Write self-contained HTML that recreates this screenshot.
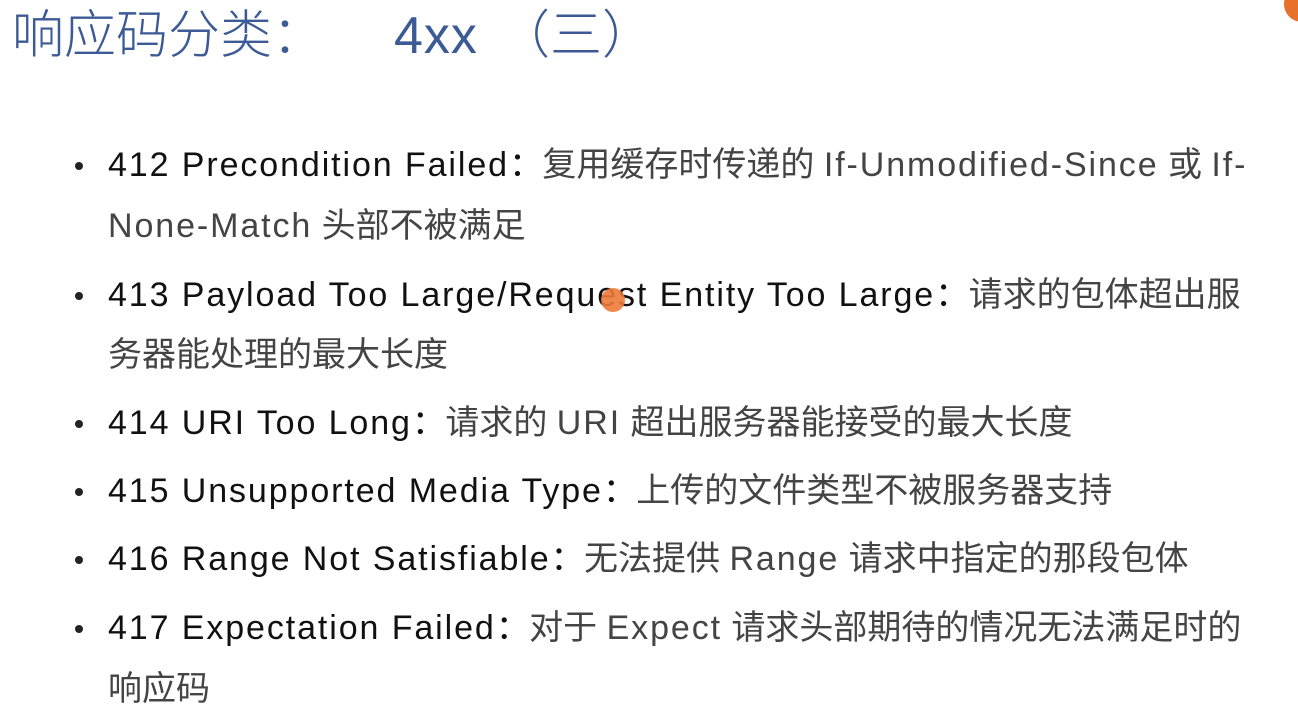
<!DOCTYPE html>
<html><head><meta charset="utf-8"><style>
html,body{margin:0;padding:0;width:1298px;height:708px;overflow:hidden;background:#fff;}
body{position:relative;font-family:"Liberation Sans","Noto Sans CJK SC",sans-serif;}
.t{position:absolute;left:12px;top:0px;font-size:52px;color:#3c5a96;white-space:nowrap;font-weight:300;line-height:72px;}
.l{position:absolute;left:108px;font-size:34px;line-height:40px;white-space:nowrap;color:#444;}
.l b{font-weight:normal;color:#111;}
.e{letter-spacing:1.9px;}
.c{letter-spacing:-10px;}
.dot{position:absolute;left:75px;width:8px;height:8px;border-radius:50%;background:#222;}
</style></head><body>
<div class="t">响应码分类：<span style="display:inline-block;width:70px"></span><span style="letter-spacing:1px">4xx</span><span style="display:inline-block;width:20px"></span>（三）</div>
<div style="position:absolute;left:1284px;top:-14px;width:36px;height:36px;border-radius:50%;background:#e8712a"></div>

<div class="dot" style="top:162px"></div>
<div class="l" style="top:145px"><b class="e">412 Precondition Failed</b><b class="c">：</b>&nbsp;复用缓存时传递的 <span class="e">If-Unmodified-Since</span> 或 <span class="e">If-</span></div>
<div class="l" style="top:206px"><span class="e">None-Match</span> 头部不被满足</div>

<div class="dot" style="top:292px"></div>
<div class="l" style="top:275px"><b class="e">413 Payload Too Large/Request Entity Too Large</b><b class="c">：</b>&nbsp;请求的包体超出服</div>
<div class="l" style="top:335px">务器能处理的最大长度</div>

<div class="dot" style="top:420px"></div>
<div class="l" style="top:403px"><b class="e">414 URI Too Long</b><b class="c">：</b>&nbsp;请求的 <span class="e">URI</span> 超出服务器能接受的最大长度</div>

<div class="dot" style="top:488px"></div>
<div class="l" style="top:471px"><b class="e">415 Unsupported Media Type</b><b class="c">：</b>&nbsp;上传的文件类型不被服务器支持</div>

<div class="dot" style="top:556px"></div>
<div class="l" style="top:539px"><b class="e">416 Range Not Satisfiable</b><b class="c">：</b>&nbsp;无法提供 <span class="e">Range</span> 请求中指定的那段包体</div>

<div class="dot" style="top:625px"></div>
<div class="l" style="top:608px"><b class="e">417 Expectation Failed</b><b class="c">：</b>&nbsp;对于 <span class="e">Expect</span> 请求头部期待的情况无法满足时的</div>
<div class="l" style="top:669px">响应码</div>

<div style="position:absolute;left:601px;top:288px;width:24px;height:24px;border-radius:50%;background:#ee7a3a;opacity:0.9"></div>
</body></html>
